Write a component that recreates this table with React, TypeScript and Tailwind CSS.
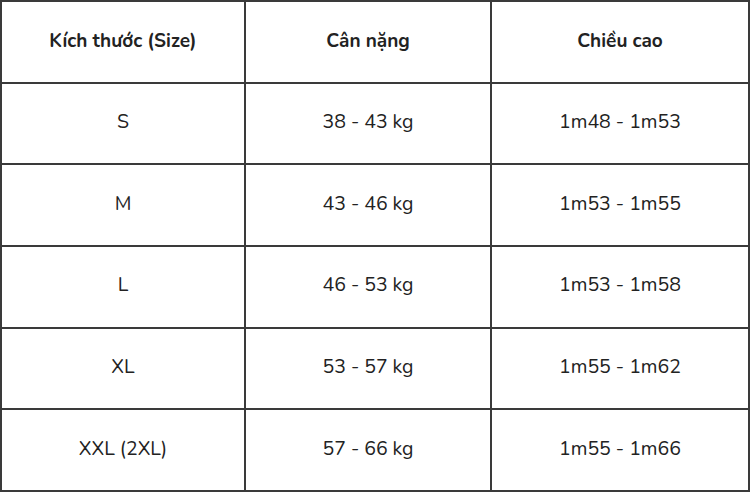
const rows = [
  ['S', '38 - 43 kg', '1m48 - 1m53'],
  ['M', '43 - 46 kg', '1m53 - 1m55'],
  ['L', '46 - 53 kg', '1m53 - 1m58'],
  ['XL', '53 - 57 kg', '1m55 - 1m62'],
  ['XXL (2XL)', '57 - 66 kg', '1m55 - 1m66'],
];

const head = ['Kích thước (Size)', 'Cân nặng', 'Chiều cao'];

export default function App() {
  return (
    <div
      className="w-[750px] h-[492px] bg-white text-[#222] border-l-2 border-t-2 border-[#3a3a3a] grid grid-cols-[244px_246px_1fr] grid-rows-6"
      style={{ fontFamily: 'Nunito, Lato, sans-serif' }}
    >
      {head.map((h) => (
        <div key={h} className="flex items-center justify-center pb-[2px] border-r-2 border-b-2 border-[#3a3a3a] text-[19px] font-bold">
          {h}
        </div>
      ))}
      {rows.map((r) =>
        r.map((c, i) => (
          <div key={r[0] + i} className="flex items-center justify-center pb-[4px] border-r-2 border-b-2 border-[#3a3a3a] text-[19.5px]">
            {c}
          </div>
        ))
      )}
    </div>
  );
}
